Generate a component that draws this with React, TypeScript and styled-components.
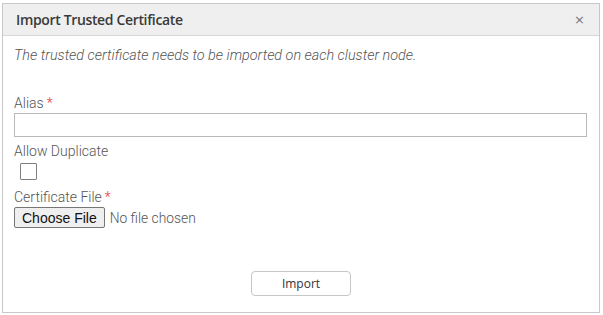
import React from "react";
import styled, { createGlobalStyle } from "styled-components";

const Global = createGlobalStyle`
  html, body { margin: 0; padding: 0; background: #fff; }
  body { font-family: Roboto, "Open Sans", sans-serif; }
`;

const Page = styled.div`
  padding: 3px 3px 0 2px;
`;

const Dialog = styled.div`
  width: 596px;
  height: 308px;
  border: 1px solid #c8c8c8;
  display: flex;
  flex-direction: column;
  background: #fff;
`;

const Header = styled.div`
  height: 31px;
  background: #efefef;
  border-bottom: 1px solid #d6d6d6;
  display: flex;
  align-items: center;
  justify-content: space-between;
  padding: 0 14px 0 13px;
`;

const Title = styled.h1`
  margin: 0;
  font-family: "Open Sans", sans-serif;
  font-weight: 600;
  font-size: 14px;
  letter-spacing: -0.35px;
  color: #3a3a3a;
`;

const Close = styled.span`
  font-family: "DejaVu Sans", sans-serif;
  font-size: 13px;
  color: #777;
  line-height: 1;
`;

const Body = styled.div`
  flex: 1;
  padding: 11px 12px 0 11px;
  display: flex;
  flex-direction: column;
`;

const Note = styled.p`
  margin: 0 0 31px 0;
  font-style: italic;
  font-weight: 300;
  font-size: 14.4px;
  line-height: 17px;
  color: #555;
`;

const Field = styled.div<{ $gap?: number }>`
  display: flex;
  flex-direction: column;
  align-items: flex-start;
  margin-bottom: ${(p) => p.$gap ?? 0}px;
`;

const Label = styled.label`
  font-size: 14px;
  font-weight: 300;
  color: #555;
  line-height: 17px;
  margin-bottom: 1px;
`;

const Req = styled.span`
  color: #e53935;
  margin-left: 3px;
`;

const TextInput = styled.input`
  box-sizing: border-box;
  width: 573px;
  height: 24px;
  border: 1px solid #b9b9b9;
  margin: 0;
  outline: none;
`;

const Check = styled.span`
  display: block;
  width: 15px;
  height: 15px;
  border: 1px solid #808080;
  margin: 2px 0 0 6px;
  border-radius: 1px;
`;

const FileRow = styled.div`
  display: flex;
  align-items: center;
  gap: 5px;
`;

const FileButton = styled.button`
  box-sizing: border-box;
  height: 21px;
  padding: 0 7px;
  font-family: "Liberation Sans", Arial, sans-serif;
  font-size: 14px;
  color: #111;
  background: #efefef;
  border: 1px solid #767676;
  border-radius: 2px;
`;

const FileName = styled.span`
  font-size: 13.8px;
  color: #555;
  font-weight: 300;
`;

const Footer = styled.div`
  display: flex;
  justify-content: center;
  padding-bottom: 16px;
`;

const ImportButton = styled.button`
  box-sizing: border-box;
  width: 100px;
  height: 25px;
  background: #fff;
  border: 1px solid #c6c6c6;
  border-radius: 4px;
  font-family: "Open Sans", sans-serif;
  font-size: 12px;
  color: #333;
`;

export default function App() {
  return (
    <>
      <Global />
      <Page>
        <Dialog>
          <Header>
            <Title>Import Trusted Certificate</Title>
            <Close>×</Close>
          </Header>
          <Body>
            <Note>The trusted certificate needs to be imported on each cluster node.</Note>
            <Field $gap={6}>
              <Label>
                Alias<Req>*</Req>
              </Label>
              <TextInput type="text" />
            </Field>
            <Field $gap={9}>
              <Label>Allow Duplicate</Label>
              <Check />
            </Field>
            <Field>
              <Label>
                Certificate File<Req>*</Req>
              </Label>
              <FileRow>
                <FileButton>Choose File</FileButton>
                <FileName>No file chosen</FileName>
              </FileRow>
            </Field>
          </Body>
          <Footer>
            <ImportButton>Import</ImportButton>
          </Footer>
        </Dialog>
      </Page>
    </>
  );
}
